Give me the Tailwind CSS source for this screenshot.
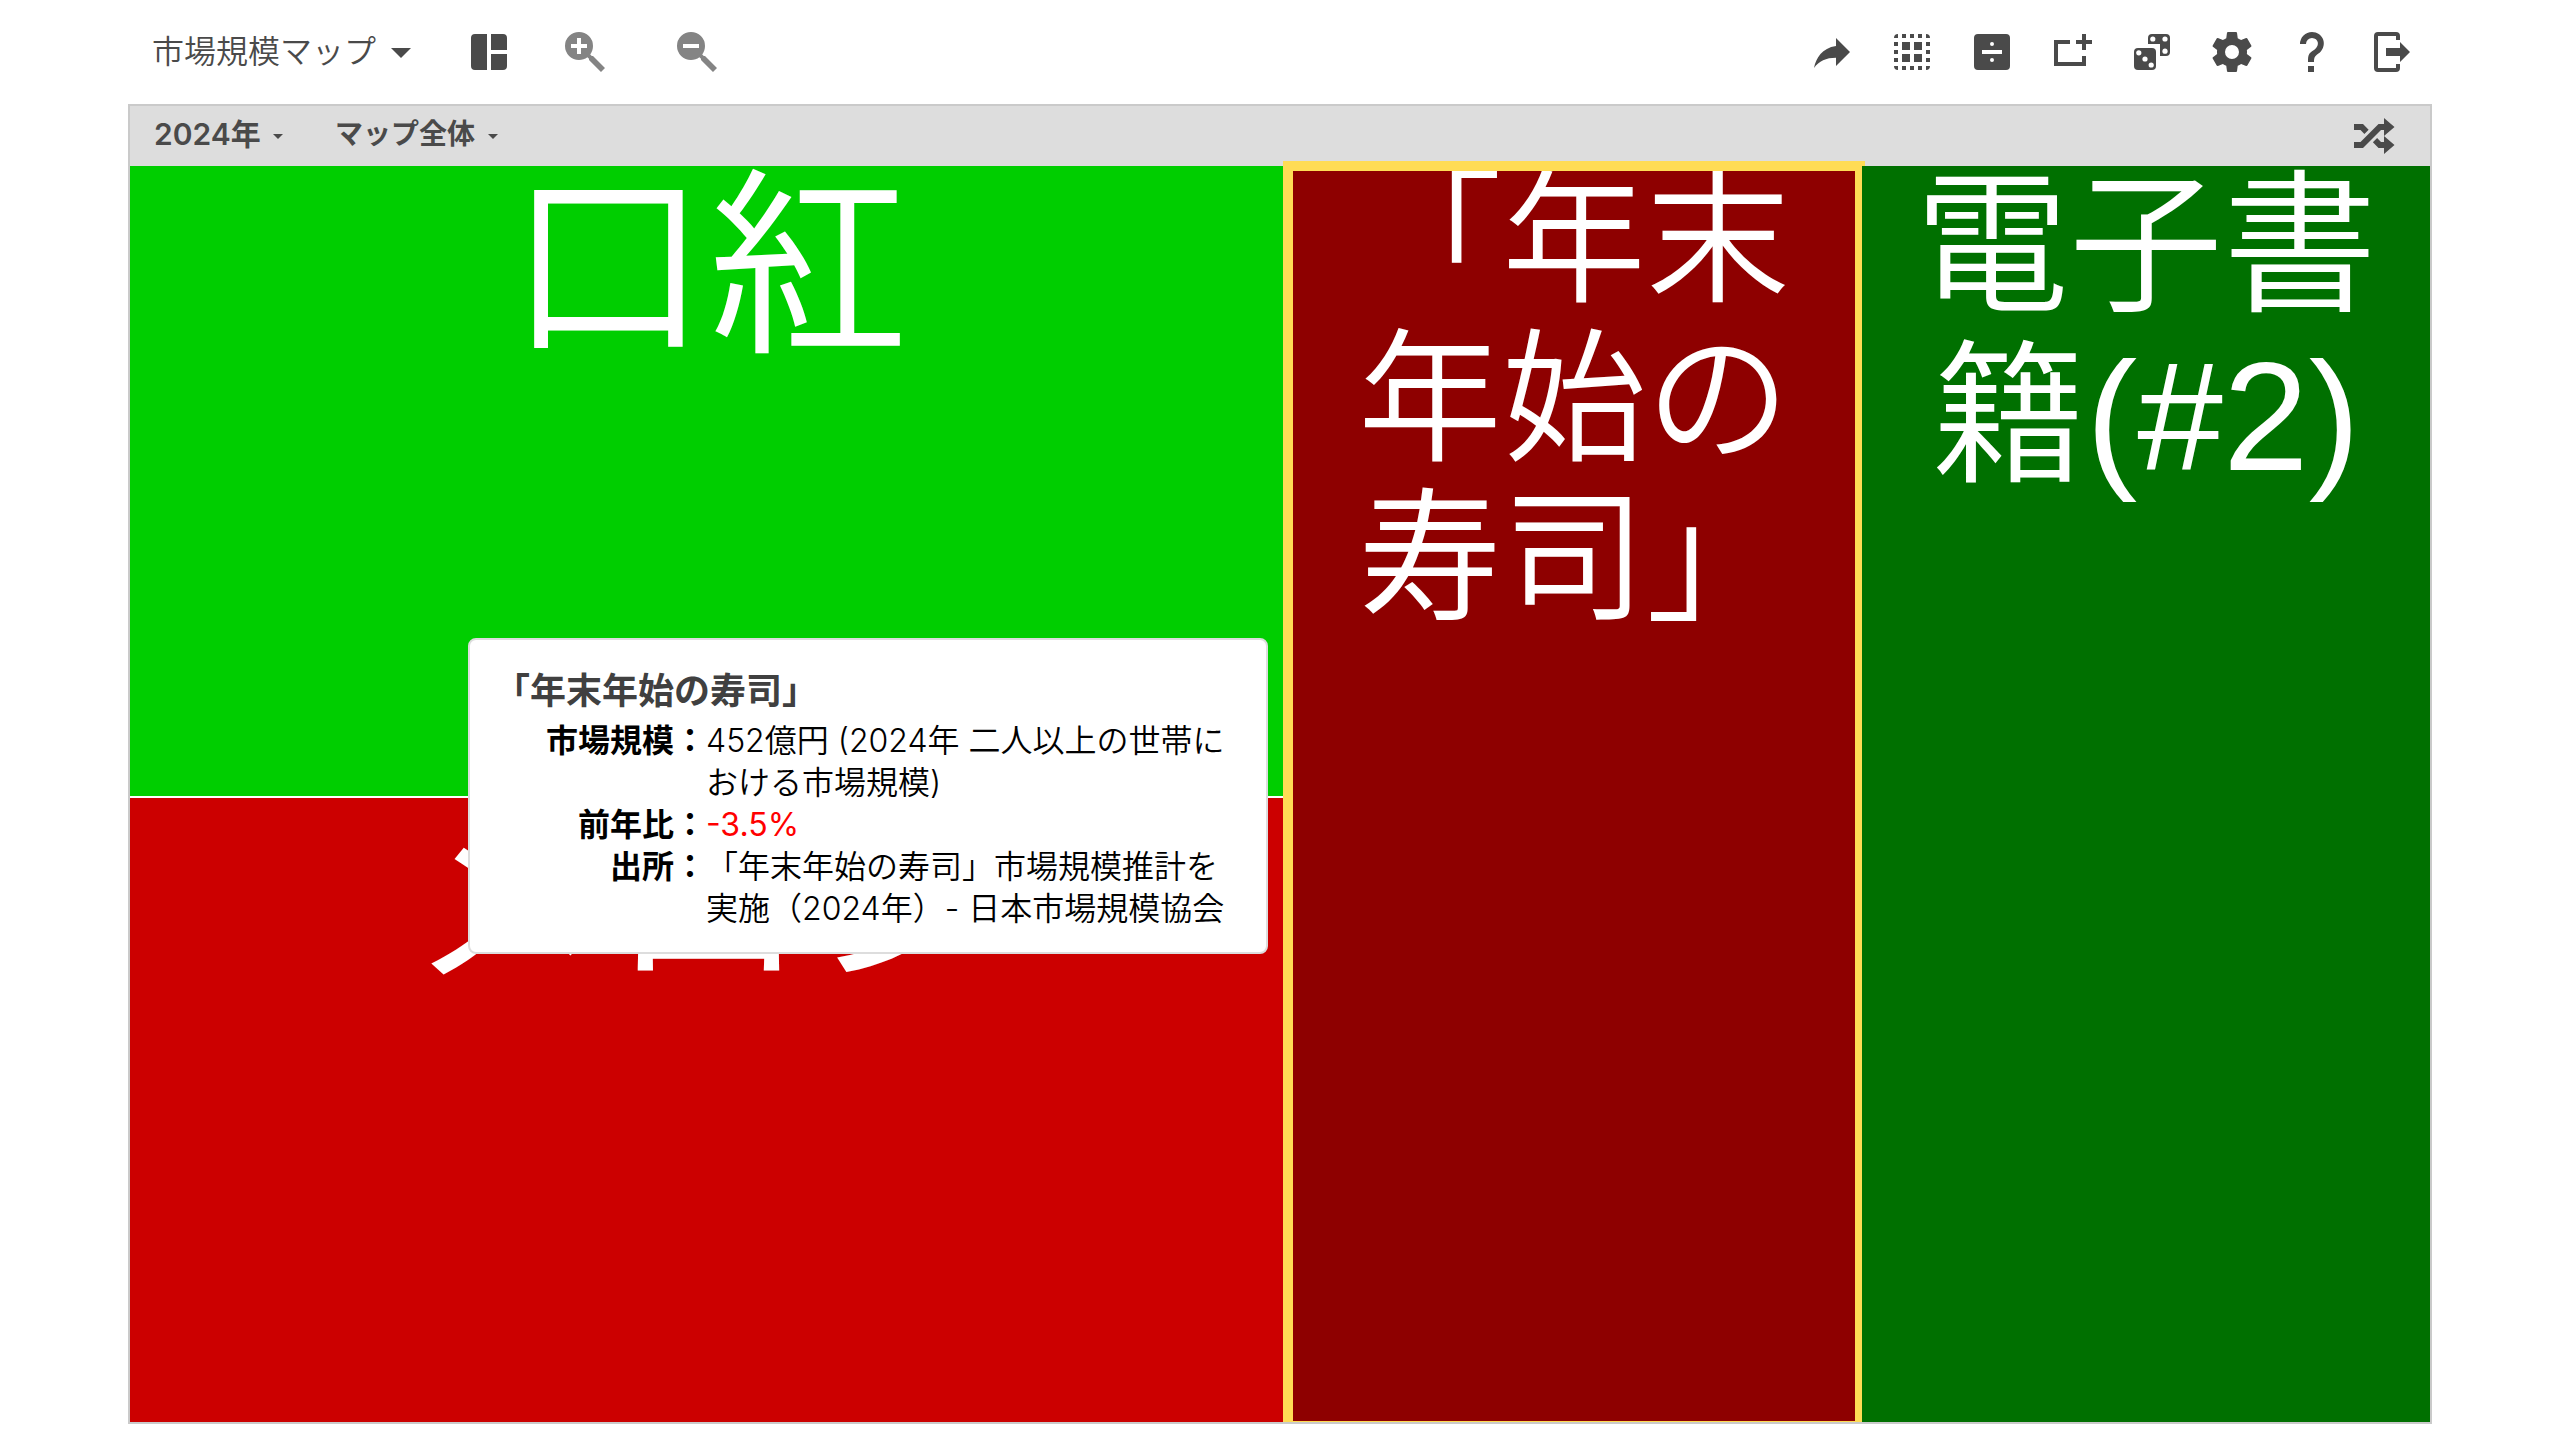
<!DOCTYPE html>
<html lang="ja">
<head>
<meta charset="utf-8">
<meta name="viewport" content="width=device-width, initial-scale=1">
<title>市場規模マップ</title>
<script src="https://cdn.jsdelivr.net/npm/@tailwindcss/browser@4"></script>
</head>
<body class="bg-white font-['Inter','Noto_Sans_CJK_JP',sans-serif] text-[#4a4a4a]">
<div class="mx-[5%] flex min-h-screen flex-col pb-4">

  <header class="flex h-[104px] shrink-0 items-center justify-between pl-6 pr-4">
    <div class="flex items-center">
      <label class="flex items-center">
        <select aria-label="マップの種類" class="appearance-none bg-transparent text-[32px] leading-[48px] font-[350]">
          <option>市場規模マップ</option>
        </select>
        <svg class="pointer-events-none size-12 fill-current" viewBox="0 0 24 24"><path d="M7 10l5 5 5-5z"/></svg>
      </label>
      <button aria-label="レイアウト" class="ml-10"><svg class="size-12 fill-current" viewBox="0 0 24 24"><path d="M11 3v18H5a2 2 0 0 1-2-2V5a2 2 0 0 1 2-2zM13 3h6a2 2 0 0 1 2 2v6h-8zM13 13h8v6a2 2 0 0 1-2 2h-6z"/></svg></button>
      <button aria-label="拡大" class="ml-12 text-[#848484]"><svg class="size-12 fill-current" viewBox="0 0 24 24"><path d="M9,2A7,7 0 0,1 16,9C16,10.57 15.5,12 14.61,13.19L15.41,14H16L22,20L20,22L14,16V15.41L13.19,14.61C12,15.5 10.57,16 9,16A7,7 0 0,1 2,9A7,7 0 0,1 9,2M8,5V8H5V10H8V13H10V10H13V8H10V5H8Z"/></svg></button>
      <button aria-label="縮小" class="ml-16 text-[#848484]"><svg class="size-12 fill-current" viewBox="0 0 24 24"><path d="M9,2A7,7 0 0,1 16,9C16,10.57 15.5,12 14.61,13.19L15.41,14H16L22,20L20,22L14,16V15.41L13.19,14.61C12,15.5 10.57,16 9,16A7,7 0 0,1 2,9A7,7 0 0,1 9,2M5,8V10H13V8H5Z"/></svg></button>
    </div>
    <div class="flex items-center gap-8">
      <button aria-label="共有"><svg class="size-12 fill-current" viewBox="0 0 24 24"><path d="M14 9V5l7 7-7 7v-4.1c-5 0-8.500 1.600-11 5.100 1-5 4-10 11-11z"/></svg></button>
      <button aria-label="選択"><svg class="size-12 fill-current" viewBox="0 0 24 24"><path d="M7 3h2v2H7zM11 3h2v2h-2zM15 3h2v2h-2zM7 19h2v2H7zM11 19h2v2h-2zM15 19h2v2h-2zM3 7h2v2H3zM3 11h2v2H3zM3 15h2v2H3zM19 7h2v2h-2zM19 11h2v2h-2zM19 15h2v2h-2zM5 3v2H3a2 2 0 0 1 2-2zM19 3a2 2 0 0 1 2 2h-2zM3 19h2v2a2 2 0 0 1-2-2zM19 19h2a2 2 0 0 1-2 2zM7 7h4v4H7zM13 7h4v4h-4zM7 13h4v4H7zM13 13h4v4h-4z"/></svg></button>
      <button aria-label="割合"><svg class="size-12 fill-current" viewBox="0 0 24 24"><path fill-rule="evenodd" d="M5 3h14a2 2 0 0 1 2 2v14a2 2 0 0 1-2 2H5a2 2 0 0 1-2-2V5a2 2 0 0 1 2-2zM7 11v2h10v-2zM12 7a1 1 0 0 0 0 2 1 1 0 0 0 0-2zM12 15a1 1 0 0 0 0 2 1 1 0 0 0 0-2z"/></svg></button>
      <button aria-label="追加"><svg class="size-12 fill-current" viewBox="0 0 24 24"><path d="M3 6h8v2H5v9h12v-3h2v5H3zM17 3h2v3h3v2h-3v3h-2V8h-3V6h3z"/></svg></button>
      <button aria-label="ランダム"><svg class="size-12 fill-current" viewBox="0 0 24 24"><path d="M12 3h7a2 2 0 0 1 2 2v7a2 2 0 0 1-2 2h-3V8h-6V5a2 2 0 0 1 2-2z"/><rect x="3" y="10" width="11" height="11" rx="2"/><g fill="#fff"><circle cx="12.400" cy="5.500" r="1.300"/><circle cx="18.500" cy="5.500" r="1.300"/><circle cx="18.500" cy="11.600" r="1.300"/><circle cx="5.400" cy="12.400" r="1.300"/><circle cx="8.500" cy="15.500" r="1.300"/><circle cx="11.600" cy="18.500" r="1.300"/></g></svg></button>
      <button aria-label="設定"><svg class="size-12 fill-current" viewBox="0 0 24 24"><path d="M12,15.5A3.5,3.5 0 0,1 8.5,12A3.5,3.5 0 0,1 12,8.5A3.5,3.5 0 0,1 15.5,12A3.5,3.5 0 0,1 12,15.5M19.43,12.97C19.47,12.65 19.5,12.33 19.5,12C19.5,11.67 19.47,11.34 19.43,11L21.54,9.37C21.73,9.22 21.78,8.95 21.66,8.73L19.66,5.27C19.54,5.05 19.27,4.96 19.05,5.05L16.56,6.05C16.04,5.66 15.5,5.32 14.87,5.07L14.5,2.42C14.46,2.18 14.25,2 14,2H10C9.75,2 9.54,2.18 9.5,2.42L9.13,5.07C8.5,5.32 7.96,5.66 7.44,6.05L4.95,5.05C4.73,4.96 4.46,5.05 4.34,5.27L2.34,8.73C2.21,8.95 2.27,9.22 2.46,9.37L4.57,11C4.53,11.34 4.5,11.67 4.5,12C4.5,12.33 4.53,12.65 4.57,12.97L2.46,14.63C2.27,14.78 2.21,15.05 2.34,15.27L4.34,18.73C4.46,18.95 4.73,19.03 4.95,18.95L7.44,17.94C7.96,18.34 8.5,18.68 9.13,18.93L9.5,21.58C9.54,21.82 9.75,22 10,22H14C14.25,22 14.46,21.82 14.5,21.58L14.87,18.93C15.5,18.67 16.04,18.34 16.56,17.94L19.05,18.95C19.27,19.03 19.54,18.95 19.66,18.73L21.66,15.27C21.78,15.05 21.73,14.78 21.54,14.63L19.43,12.97Z"/></svg></button>
      <button aria-label="ヘルプ"><svg class="size-12 fill-current" viewBox="0 0 24 24"><path d="M10,19H13V22H10V19M12,2C17.35,2.22 19.68,7.62 16.5,11.67C15.67,12.67 14.33,13.33 13.67,14.17C13,15 13,16 13,17H10C10,15.33 10,13.92 10.67,12.92C11.33,11.92 12.67,11.33 13.5,10.67C15.92,8.43 15.32,5.26 12,5A3,3 0 0,0 9,8H6A6,6 0 0,1 12,2Z"/></svg></button>
      <button aria-label="ログアウト"><svg class="size-12 fill-current" viewBox="0 0 24 24"><path d="M16,17V14H9V10H16V7L21,12L16,17M14,2A2,2 0 0,1 16,4V6H14V4H5V20H14V18H16V20A2,2 0 0,1 14,22H5A2,2 0 0,1 3,20V4A2,2 0 0,1 5,2H14Z"/></svg></button>
    </div>
  </header>

  <main class="flex grow flex-col border-2 border-[#cacaca]">
    <div class="flex h-[60px] shrink-0 items-center justify-between bg-[#ddd] pl-6 pr-8">
      <div class="flex items-center gap-13 pb-1 text-[28px] leading-10 font-semibold">
        <label class="flex items-center gap-3">
          <select aria-label="年" class="appearance-none bg-transparent text-[30px]"><option>2024年</option></select>
          <svg class="pointer-events-none mt-1 h-[5px] w-[10px] fill-current" viewBox="0 0 10 5"><path d="M0 0h10L5 5z"/></svg>
        </label>
        <label class="flex items-center gap-3">
          <select aria-label="表示範囲" class="appearance-none bg-transparent"><option>マップ全体</option></select>
          <svg class="pointer-events-none mt-1 h-[5px] w-[10px] fill-current" viewBox="0 0 10 5"><path d="M0 0h10L5 5z"/></svg>
        </label>
      </div>
      <button aria-label="シャッフル"><svg class="size-12 fill-current" viewBox="0 0 24 24"><path d="M17,3L22.25,7.5L17,12L22.25,16.5L17,21V18H14.26L11.44,15.18L13.56,13.06L15.5,15H17V12L17,9H15.5L6.5,18H2V15H5.26L14.26,6H17V3M2,6H6.5L9.32,8.82L7.2,10.94L5.26,9H2V6Z"/></svg></button>
    </div>

    <div class="relative grid grow grid-cols-[1156fr_572fr_568fr] gap-[2px] text-center font-['Liberation_Sans','Noto_Sans_CJK_JP',sans-serif] font-[350] text-white">
      <div class="grid min-w-0 grid-rows-[630fr_624fr] gap-[2px] text-[200px] leading-[212px]">
        <section class="flow-root bg-[#00ce00]"><p class="-mt-1">口紅</p></section>
        <section class="flow-root bg-[#cc0000]"><p class="-mt-1">メロン</p></section>
      </div>
      <section class="relative flow-root min-w-0 bg-[#8e0000] text-[144px] leading-[159px]">
        <p class="-mt-1">「年末年始の寿司」</p>
        <div class="absolute -inset-x-[5px] -top-[5px] bottom-0 border-10 border-b border-[#ffdc55]"></div>
      </section>
      <section class="relative flow-root min-w-0 bg-[#007000] text-[154px] leading-[170px]"><p class="-mt-1">電子書籍(#2)</p></section>

      <div role="tooltip" class="absolute top-[472px] left-[338px] w-[800px] rounded-lg border-2 border-[#ddd] bg-white px-6 pt-6 pb-[22px] text-left font-['Inter','Noto_Sans_CJK_JP',sans-serif] text-[32px] leading-[42px] font-[350] text-black">
        <h2 class="mb-[2px] text-[36px] leading-[54px] font-bold text-[#404040]">「年末年始の寿司」</h2>
        <dl class="grid grid-cols-[212px_1fr] whitespace-nowrap">
          <dt class="text-right font-bold">市場規模：</dt><dd>452億円 (2024年 二人以上の世帯に<br>おける市場規模)</dd>
          <dt class="text-right font-bold">前年比：</dt><dd class="font-normal text-[#ff0000]">-3.5%</dd>
          <dt class="text-right font-bold">出所：</dt><dd>「年末年始の寿司」市場規模推計を<br>実施（2024年）- 日本市場規模協会</dd>
        </dl>
      </div>
    </div>
  </main>
</div>
</body>
</html>
